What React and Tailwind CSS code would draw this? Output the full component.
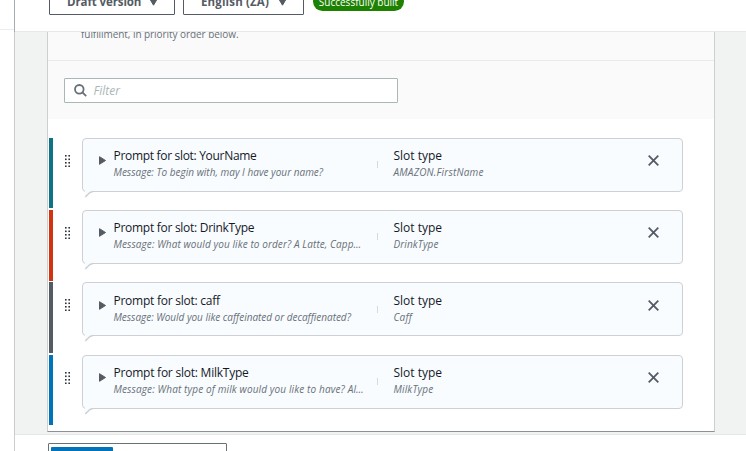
import React from "react";

const SLOTS = [
  { name: "YourName", message: "To begin with, may I have your name?", type: "AMAZON.FirstName", row: "h-[72px]", inner: "pt-0", bar: "h-[70px] bg-[#0f7386]", title: "tracking-[-0.31px]", msg: "tracking-[0.01px]", kind: "tracking-[0.2px]" },
  { name: "DrinkType", message: "What would you like to order? A Latte, Capp…", type: "DrinkType", row: "h-[72px]", inner: "pt-0", bar: "h-[71px] bg-[#d13212]", title: "tracking-[-0.28px]", msg: "tracking-[0.09px]", kind: "tracking-[0.1px]" },
  { name: "caff", message: "Would you like caffeinated or decaffienated?", type: "Caff", row: "h-[73px]", inner: "pt-px", bar: "h-[71px] bg-[#545b64]", title: "tracking-[-0.25px]", msg: "tracking-[-0.02px]", kind: "tracking-[0.2px]" },
  { name: "MilkType", message: "What type of milk would you like to have? Al…", type: "MilkType", row: "h-[76px]", inner: "pt-0", bar: "h-[70px] bg-[#0073bb]", title: "tracking-[-0.23px]", msg: "tracking-[0.13px]", kind: "tracking-[0.15px]" },
];

function DragHandle() {
  return (
    <svg className="ml-3 mt-[17px] h-3 w-[5px] shrink-0 fill-[#2b323a]" viewBox="0 0 5 12">
      {[0, 3.5, 7, 10.5].map((y) => (
        <g key={y}>
          <rect x="0" y={y} width="1.6" height="1.6" />
          <rect x="3.4" y={y} width="1.6" height="1.6" />
        </g>
      ))}
    </svg>
  );
}

function Slot({ slot }) {
  return (
    <div className={`flex items-start pl-px ${slot.row}`}>
      <div className={`w-1 shrink-0 ${slot.bar}`} />
      <DragHandle />
      <div className={`relative ml-3 flex h-[54px] w-[601px] shrink-0 items-start rounded border border-[#cdd0d4] bg-[#f8fcff] ${slot.inner}`}>
        <svg className="ml-[15.5px] mt-[17px] h-[9px] w-[7px] shrink-0" viewBox="0 0 7 9">
          <path d="M.5.7 6.5 4.5.5 8.3z" fill="#545b64" stroke="#545b64" strokeLinejoin="round" />
        </svg>
        <div className="ml-2 w-[263.5px] pt-[9px] whitespace-nowrap">
          <p className={`text-[12px] leading-4 text-[#16191f] ${slot.title}`}>Prompt for slot: {slot.name}</p>
          <p className={`text-[10px] leading-4 text-[#687078] italic ${slot.msg}`}>Message: {slot.message}</p>
        </div>
        <div className="mt-[22px] h-[7px] w-px bg-[#d5dbdb]" />
        <div className="ml-[15.5px] w-[254.5px] pt-[9px] whitespace-nowrap">
          <p className="text-[12px] leading-4 text-[#16191f]">Slot type</p>
          <p className={`text-[10px] leading-4 text-[#687078] italic ${slot.kind}`}>{slot.type}</p>
        </div>
        <svg className="mt-4 h-[11px] w-[11px] shrink-0" viewBox="0 0 11 11">
          <path d="M.7.7l9.6 9.6M10.3.7.7 10.3" stroke="#545b64" strokeWidth="1.8" />
        </svg>
        <svg className="absolute top-[51px] left-[2px] h-[8px] w-[8px]" viewBox="0 0 8 8">
          <path d="M0 0v7.2L5 2.2H8V0z" fill="#f8fcff" />
          <path d="M.3 7 4.3 3Q5 2.3 8 1.5" fill="none" stroke="#cdd0d4" strokeWidth="1.5" />
        </svg>
      </div>
    </div>
  );
}

function Picker({ children, className }) {
  return (
    <div className={`flex h-[30px] shrink-0 items-center justify-between rounded-[1px] border border-[#545b64] pr-4 pl-[17px] text-[11.5px] font-bold whitespace-nowrap text-[#545b64] ${className}`}>
      <span className="mt-[3px]">{children}</span>
      <svg className="mt-[3px] h-2 w-[9px]" viewBox="0 0 9 8">
        <path d="M.6.6h7.8L4.5 7.2z" fill="#545b64" stroke="#545b64" strokeLinejoin="round" />
      </svg>
    </div>
  );
}

export default function App() {
  return (
    <div className="flex h-[451px] w-[746px] overflow-hidden bg-white font-['Open_Sans','Noto_Sans',sans-serif]">
      <aside className="flex w-[15px] shrink-0 flex-col">
        <div className="h-8 border-r border-[#a5adb0]">
          <div className="h-[30px] border-b border-[#eaeded]" />
        </div>
        <div className="flex-1 border-r border-[#c9cdcf]" />
      </aside>
      <div className="flex min-w-0 flex-1 flex-col">
        <header className="flex h-8 shrink-0 items-end overflow-hidden border-b border-[#e6e8e9] bg-white pb-4 pl-[34px]">
          <Picker className="w-[126px] tracking-[-0.1px]">Draft version</Picker>
          <Picker className="ml-2 w-[121px] tracking-[0.15px]">English (ZA)</Picker>
          <div className="mb-1 ml-[9px] flex h-[19px] w-[91px] shrink-0 items-center justify-center rounded-full bg-[#1d8102] text-[10px] whitespace-nowrap text-white">
            <span className="mt-px">Successfully built</span>
          </div>
        </header>

        <main className="h-[402px] shrink-0 overflow-hidden bg-[#f1f3f3] pl-8">
          <div className="h-[400px] w-[668px] border-r border-b border-l border-r-[#cccfd0] border-b-[#8c9196] border-l-[#cccfd0] bg-white">
            <div className="h-[29px] overflow-hidden border-b border-[#e8eaeb] bg-[#fafafa] pl-[33px]">
              <p className="-mt-[6px] text-[10px] leading-4 tracking-[-0.06px] whitespace-nowrap text-[#687078]">fulfillment, in priority order below.</p>
            </div>
            <div className="h-[58px] bg-[#fafafa] pt-[17px] pl-4">
              <div className="flex h-[25px] w-[334px] items-center rounded-[1px] border border-[#aab7b8] bg-white pl-[8.5px]">
                <svg className="-mt-px h-[13px] w-[13px]" viewBox="0 0 13 13" fill="none" stroke="#687078" strokeWidth="1.8">
                  <circle cx="5.3" cy="5.3" r="4.3" />
                  <path d="m8.4 8.4 3.8 3.8" />
                </svg>
                <span className="ml-[7px] text-[12px] text-[#aab7b8] italic">Filter</span>
              </div>
            </div>
            <div className="pt-[19px]">
              {SLOTS.map((slot) => <Slot key={slot.name} slot={slot} />)}
            </div>
          </div>
        </main>

        <footer className="flex-1 overflow-hidden border-t border-[#e4e6e7] bg-white pt-2 pl-[33px]">
          <div className="h-[34px] w-[179px] rounded-[1px] border border-[#687078] pt-[3px] pl-[2px]">
            <div className="h-[26px] w-[62px] rounded-[1px] bg-[#0073bb]" />
          </div>
        </footer>
      </div>
    </div>
  );
}
